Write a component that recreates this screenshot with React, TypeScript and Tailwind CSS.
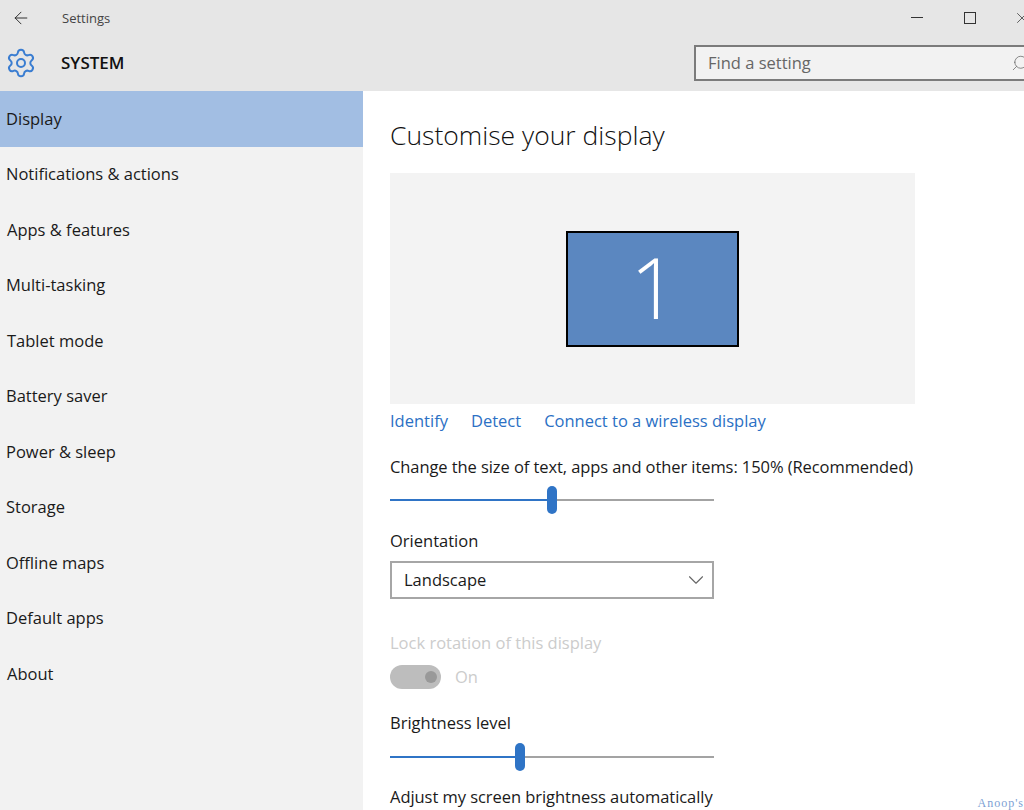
import React from 'react';
import { ArrowLeft, ChevronDown, Search, Settings, X } from 'lucide-react';

const navItems = [
  { label: 'Display', active: true },
  { label: 'Notifications & actions' },
  { label: 'Apps & features', indent: true },
  { label: 'Multi-tasking' },
  { label: 'Tablet mode', indent: true },
  { label: 'Battery saver' },
  { label: 'Power & sleep' },
  { label: 'Storage' },
  { label: 'Offline maps' },
  { label: 'Default apps' },
  { label: 'About', indent: true },
];

const Slider = ({ value }: { value: number }) => (
  <div className="relative h-[28px] w-[324px] flex items-center">
    <div className="h-[2px] bg-[#2f74c6]" style={{ width: value }} />
    <div className="h-[28px] w-[10px] rounded-[5px] bg-[#2f74c6] shrink-0" />
    <div className="h-[2px] flex-1 bg-[#a3a3a3]" />
  </div>
);

const App: React.FC = () => {
  return (
    <div className="relative h-[810px] w-[1024px] overflow-hidden bg-white text-[16.5px] leading-[24px] text-[#1a1a1a] font-['Open_Sans','Noto_Sans',sans-serif]">
      {/* Title bar + header */}
      <div className="h-[91px] bg-[#e6e6e6]">
        <div className="flex h-[35px] items-center">
          <ArrowLeft size={20} strokeWidth={1.1} className="ml-[11px] text-[#222]" />
          <span className="ml-[31px] text-[13px] text-[#444]">Settings</span>
          <div className="ml-auto flex items-center">
            <div className="h-px w-[12px] bg-[#333]" />
            <div className="ml-[41px] h-[12px] w-[12px] border border-[#333]" />
            <X size={18} strokeWidth={1} className="ml-[37px] -mr-[7px] text-[#333]" />
          </div>
        </div>
        <div className="flex h-[56px] items-start">
          <Settings size={32} strokeWidth={1.5} className="ml-[5px] mt-[12px] text-[#3a7dd1]" />
          <span className="ml-[24px] mt-[16px] text-[17px] font-semibold text-[#111]">SYSTEM</span>
          <div className="ml-auto mt-[10px] -mr-[8px] flex h-[36px] w-[338px] items-center border-2 border-[#7b7b7b] bg-[#f2f2f2] pl-[12px]">
            <span className="text-[#666]">Find a setting</span>
            <Search size={18} strokeWidth={1} className="ml-auto mr-[1px] -scale-x-100 text-[#666]" />
          </div>
        </div>
      </div>

      <div className="flex h-[719px]">
        {/* Sidebar */}
        <div className="w-[363px] shrink-0 bg-[#f2f2f2]">
          {navItems.map((item) => (
            <div
              key={item.label}
              className={`flex h-[55.5px] items-center ${item.indent ? 'pl-[7px]' : 'pl-[6px]'} ${item.active ? 'bg-[#a2bee3]' : ''}`}
            >
              {item.label}
            </div>
          ))}
        </div>

        {/* Content */}
        <div className="flex-1 pl-[27px]">
          <h1 className="mt-[25px] h-[39px] text-[26.5px] leading-[38px] font-light text-[#111]">Customise your display</h1>

          <div className="mt-[18px] flex h-[231px] w-[525px] items-center justify-center bg-[#f3f3f3]">
            <div className="flex h-[116px] w-[173px] items-center justify-center border-2 border-black bg-[#5b87c0] pb-[4px] pl-[3px] text-[84px] font-light text-white">
              1
            </div>
          </div>

          <div className="mt-[5px] flex h-[24px] text-[#2b70c4]">
            <span>Identify</span>
            <span className="ml-[23px]">Detect</span>
            <span className="ml-[23px]">Connect to a wireless display</span>
          </div>

          <p className="mt-[22px] tracking-[-0.08px]">Change the size of text, apps and other items: 150% (Recommended)</p>
          <div className="mt-[7px]">
            <Slider value={157} />
          </div>

          <p className="mt-[15px]">Orientation</p>
          <div className="mt-[8px] flex h-[38px] w-[324px] items-center justify-between border-2 border-[#a6a6a6] pl-[12px] pr-[3px]">
            <span>Landscape</span>
            <ChevronDown size={26} strokeWidth={1} className="text-[#666]" />
          </div>

          <p className="mt-[32px] text-[#cccccc]">Lock rotation of this display</p>
          <div className="mt-[10px] flex h-[24px] items-center">
            <div className="flex h-[24px] w-[51px] items-center justify-end rounded-full bg-[#bdbdbd] pr-[4px]">
              <div className="h-[12px] w-[12px] rounded-full bg-[#999999]" />
            </div>
            <span className="ml-[14px] text-[#cccccc]">On</span>
          </div>

          <p className="mt-[22px]">Brightness level</p>
          <div className="mt-[8px]">
            <Slider value={125} />
          </div>

          <p className="mt-[14px] tracking-[-0.05px]">Adjust my screen brightness automatically</p>
        </div>
      </div>

      <span className="absolute right-0 bottom-0 text-[12px] leading-[14px] tracking-[1px] text-[#7d9fd4] font-['Liberation_Serif',serif]">
        Anoop's
      </span>
    </div>
  );
};

export default App;
